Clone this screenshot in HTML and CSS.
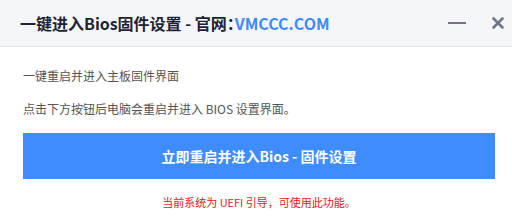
FILE: index.html
```html
<!DOCTYPE html>
<html lang="zh-CN">

<head>
    <meta charset="UTF-8">
    <title>一键进入Bios固件设置</title>
    <link rel="stylesheet" href="styles.css">
</head>

<body>
    <div class="dialog">
        <div class="header">
            <h1 class="title">一键进入Bios固件设置 - 官网：<span class="site">VMCCC.COM</span></h1>
            <div class="controls">
                <span class="btn-min"></span>
                <svg class="btn-close" width="14" height="14" viewBox="0 0 14 14">
                    <path d="M2.5 2.5 L11.5 11.5 M11.5 2.5 L2.5 11.5" stroke="#6e7588" stroke-width="2.6" stroke-linecap="round" />
                </svg>
            </div>
        </div>

        <div class="content">
            <p class="desc first">一键重启并进入主板固件界面</p>
            <p class="desc">点击下方按钮后电脑会重启并进入 BIOS 设置界面。</p>
            <button type="button" class="action">立即重启并进入Bios - 固件设置</button>
            <p class="note">当前系统为 UEFI 引导，可使用此功能。</p>
        </div>
    </div>
</body>

</html>
```

FILE: styles.css
```css
* {
    margin: 0;
    padding: 0;
    box-sizing: border-box;
}

body {
    font-family: "Noto Sans CJK SC", "Noto Sans", sans-serif;
    background-color: #fff;
    width: 512px;
    height: 219px;
    overflow: hidden;
}

.header {
    height: 47px;
    background-color: #f5f6fa;
    border-bottom: 1px solid #e3e5ea;
    display: flex;
    align-items: center;
    justify-content: space-between;
    padding: 0 7px 0 20px;
}

.title {
    font-size: 16px;
    font-weight: bold;
    color: #1e2433;
    margin-top: -1px;
    font-feature-settings: "halt";
}

.site {
    color: #3d8bff;
}

.controls {
    display: flex;
    align-items: center;
    gap: 25px;
}

.btn-min {
    display: block;
    width: 18px;
    height: 2px;
    background-color: #6e7588;
}

.btn-close {
    display: block;
}

.content {
    padding: 19px 17px 0 23px;
}

.desc {
    font-size: 12px;
    color: #555;
    line-height: 20px;
    margin-top: 13px;
}

.desc.first {
    margin-top: 0;
}

.action {
    display: block;
    width: 472px;
    height: 46px;
    margin-top: 14px;
    background-color: #3f8cff;
    color: #fff;
    border: none;
    font-family: inherit;
    font-size: 14px;
    font-weight: bold;
    cursor: pointer;
}

.note {
    width: 472px;
    text-align: center;
    font-size: 11px;
    color: #e6161a;
    line-height: 16px;
    margin-top: 15px;
}
```
